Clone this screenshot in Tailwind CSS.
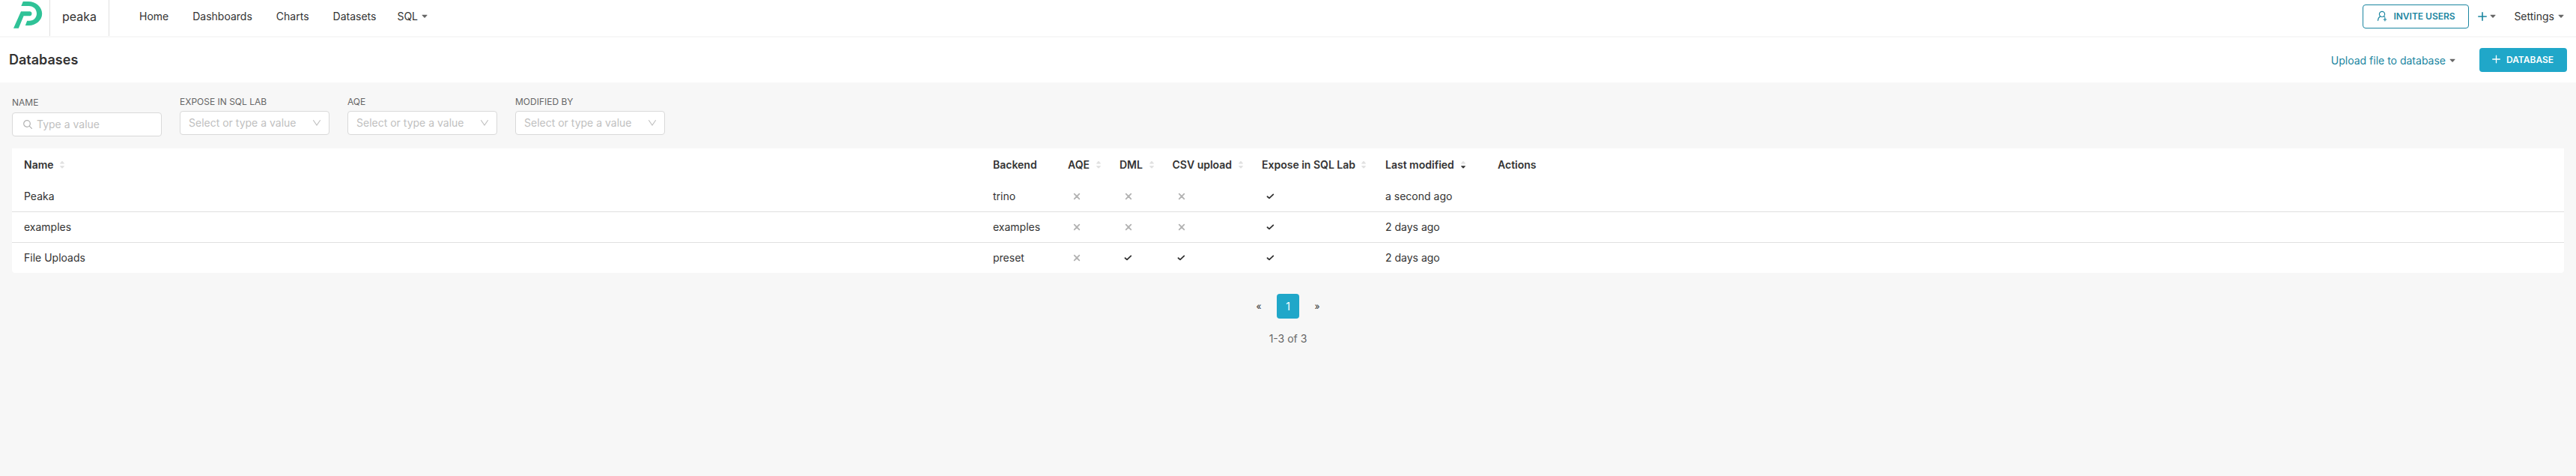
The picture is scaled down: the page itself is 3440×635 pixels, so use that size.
<!DOCTYPE html>
<html lang="en">
<head>
<meta charset="utf-8">
<title>Databases</title>
<script src="https://cdn.jsdelivr.net/npm/@tailwindcss/browser@4"></script>
</head>
<body class="h-[635px] overflow-hidden bg-[#f7f7f7] font-['Inter',sans-serif] text-sm text-[#333333]">
<svg class="hidden">
  <symbol id="caret" viewBox="0 0 8 6"><path d="M1 .8h6c.5 0 .7.4.4.7L4.6 4.600c-.3.3-.8.3-1.100 0L.7 1.500C.4 1.200.6.8 1 .8z" fill="#666666"/></symbol>
  <symbol id="up" viewBox="0 0 8 12"><path d="M3.400 1.300c.3-.3.9-.3 1.200 0l2.200 2.400c.3.400.1.800-.4.800H1.600c-.5 0-.7-.4-.4-.8z" fill="#e0e0e0"/></symbol>
  <symbol id="down" viewBox="0 0 8 12"><path d="M3.400 10.300c.3.300.9.300 1.200 0l2.200-2.300c.3-.4.1-.8-.4-.8H1.600c-.5 0-.7.400-.4.800z" fill="currentColor"/></symbol>
  <symbol id="sort" viewBox="0 0 8 12"><use href="#up"/><use href="#down"/></symbol>
  <symbol id="x" viewBox="0 0 24 24"><path d="M8.700 8.700l6.600 6.600M15.300 8.700l-6.600 6.600" stroke="#b2b2b2" stroke-width="1.800" stroke-linecap="round"/></symbol>
  <symbol id="check" viewBox="0 0 24 24"><path d="M7.500 12.200l2.500 2.200 5.300-5" fill="none" stroke="#323232" stroke-width="1.800" stroke-linecap="round" stroke-linejoin="round"/></symbol>
  <symbol id="chevron" viewBox="0 0 12 12"><path d="M1.300 2.300L6 9l4.700-6.700" fill="none" stroke="#bfbfbf" stroke-width="1.100"/></symbol>
</svg>

<header class="flex h-[50px] items-stretch border-b-2 border-[#f7f7f7] bg-white">
  <div class="flex w-[67px] border-r border-[#e0e0e0] pl-[17px]">
    <svg class="mt-px h-[38px] w-[41px]" viewBox="17 1 41 38" fill="#2fc297">
      <path d="M30.800 2H37.500C48 2 56.200 9.500 56.200 18.300S48 34 38.500 34H33.800L36.200 27.800H39C45 27.800 49 23.500 49 18C49 12.300 44.500 8 38.500 8H28.300z"/>
      <path d="M28 15.200H40.300A3.200 3.200 0 0 1 40.300 21.300H31.600L24.800 37.800H18z"/>
    </svg>
  </div>
  <div class="flex w-[79px] items-center border-r border-[#e0e0e0] pb-[5px] pl-4 text-base">peaka</div>
  <nav class="flex h-11 items-center gap-8 pl-10">
    <a>Home</a><a>Dashboards</a><a>Charts</a><a>Datasets</a>
    <a class="-ml-1 flex items-center gap-[5px]">SQL<svg class="h-1.5 w-2"><use href="#caret"/></svg></a>
  </nav>
  <div class="ml-auto flex h-11 items-center pr-4">
    <button class="flex h-8 w-[142px] items-center rounded border border-[#1a85a0] pl-[18px] text-xs font-semibold text-[#1a85a0]">
      <svg class="mr-2 h-[15px] w-[14px] -translate-y-px" viewBox="0 0 14 15" fill="none" stroke="#1a85a0" stroke-width="1.200" stroke-linecap="round"><circle cx="7" cy="4.900" r="3.600"/><path d="M1.500 13.300c.2-2.700 1.400-4.700 3.200-5.600M9.300 7.700l1.500 1.200M10.900 10.200v3.600M9.100 12h3.600"/></svg>INVITE USERS</button>
    <svg class="ml-3 h-3 w-3" viewBox="0 0 12 12"><path d="M6 .8v10.400M.8 6h10.400" stroke="#1a85a0" stroke-width="1.600" stroke-linecap="round"/></svg>
    <svg class="ml-1 h-1.5 w-2"><use href="#caret"/></svg>
    <a class="ml-6 flex items-center gap-[5px]">Settings<svg class="h-1.5 w-2"><use href="#caret"/></svg></a>
  </div>
</header>

<section class="flex h-[60px] items-center bg-white pr-3 pl-3">
  <h1 class="text-lg font-semibold">Databases</h1>
  <a class="mt-0.5 ml-auto flex items-center gap-[5px] text-[#1a85a0]">Upload file to database<svg class="h-1.5 w-2"><use href="#caret"/></svg></a>
  <button class="ml-8 flex h-8 w-[117px] items-center rounded bg-[#20a7c9] pl-[17px] text-xs font-semibold text-white">
    <svg class="mr-2 h-3 w-[11px] -translate-y-px" viewBox="0 0 11 12"><path d="M5.500 1.200v9.600M.7 6h9.600" stroke="#fff" stroke-width="1.300" stroke-linecap="round"/></svg>DATABASE</button>
</section>

<section class="flex h-[88px] gap-6 px-4 pt-[18px]">
  <label class="w-[200px] pt-px text-xs leading-4 text-[#666666]"><span class="block h-[21px]">NAME</span>
    <span class="flex h-8 items-center rounded border border-[#d9d9d9] bg-white pl-[14px] text-sm text-[#bfbfbf]"><svg class="mr-1.5 h-3 w-3" viewBox="0 0 12 12" fill="none" stroke="#b2b2b2" stroke-width="1.200" stroke-linecap="round"><circle cx="5" cy="5" r="4.300"/><path d="M8.200 8.200l3.200 3.200"/></svg>Type a value</span></label>
  <label class="w-[200px] text-xs leading-4 text-[#666666]"><span class="block h-5">EXPOSE IN SQL LAB</span>
    <span class="flex h-8 items-center justify-between rounded border border-[#d9d9d9] bg-white pr-2.5 pl-[11px] text-sm text-[#bfbfbf]">Select or type a value<svg class="h-3 w-3"><use href="#chevron"/></svg></span></label>
  <label class="w-[200px] text-xs leading-4 text-[#666666]"><span class="block h-5">AQE</span>
    <span class="flex h-8 items-center justify-between rounded border border-[#d9d9d9] bg-white pr-2.5 pl-[11px] text-sm text-[#bfbfbf]">Select or type a value<svg class="h-3 w-3"><use href="#chevron"/></svg></span></label>
  <label class="w-[200px] text-xs leading-4 text-[#666666]"><span class="block h-5">MODIFIED BY</span>
    <span class="flex h-8 items-center justify-between rounded border border-[#d9d9d9] bg-white pr-2.5 pl-[11px] text-sm text-[#bfbfbf]">Select or type a value<svg class="h-3 w-3"><use href="#chevron"/></svg></span></label>
</section>

<main class="mx-4 rounded-b bg-white">
  <div class="grid h-11 grid-cols-[1294px_100px_69px_70.5px_119.5px_165px_150px_1fr] items-center pl-4 font-semibold">
    <div class="flex items-center gap-[7px]">Name<svg class="h-3 w-2 text-[#e0e0e0]"><use href="#sort"/></svg></div>
    <div>Backend</div>
    <div class="flex items-center gap-2">AQE<svg class="h-3 w-2 text-[#e0e0e0]"><use href="#sort"/></svg></div>
    <div class="flex items-center gap-2">DML<svg class="h-3 w-2 text-[#e0e0e0]"><use href="#sort"/></svg></div>
    <div class="flex items-center gap-2">CSV upload<svg class="h-3 w-2 text-[#e0e0e0]"><use href="#sort"/></svg></div>
    <div class="flex items-center gap-[7px]">Expose in SQL Lab<svg class="h-3 w-2 text-[#e0e0e0]"><use href="#sort"/></svg></div>
    <div class="flex items-center gap-2">Last modified<svg class="h-3 w-2 text-[#323232]"><use href="#sort"/></svg></div>
    <div>Actions</div>
  </div>
  <div class="grid h-[41px] grid-cols-[1294px_100px_69px_70.5px_119.5px_165px_150px_1fr] items-center border-b border-[#e0e0e0] pl-4">
    <div>Peaka</div><div>trino</div>
    <svg class="size-6"><use href="#x"/></svg><svg class="size-6"><use href="#x"/></svg><svg class="size-6"><use href="#x"/></svg><svg class="size-6"><use href="#check"/></svg>
    <div>a second ago</div>
  </div>
  <div class="grid h-[41px] grid-cols-[1294px_100px_69px_70.5px_119.5px_165px_150px_1fr] items-center border-b border-[#e0e0e0] pl-4">
    <div>examples</div><div>examples</div>
    <svg class="size-6"><use href="#x"/></svg><svg class="size-6"><use href="#x"/></svg><svg class="size-6"><use href="#x"/></svg><svg class="size-6"><use href="#check"/></svg>
    <div>2 days ago</div>
  </div>
  <div class="grid h-10 grid-cols-[1294px_100px_69px_70.5px_119.5px_165px_150px_1fr] items-center pl-4">
    <div>File Uploads</div><div>preset</div>
    <svg class="size-6"><use href="#x"/></svg><svg class="size-6"><use href="#check"/></svg><svg class="size-6"><use href="#check"/></svg><svg class="size-6"><use href="#check"/></svg>
    <div>2 days ago</div>
  </div>
</main>

<footer class="mt-7 flex flex-col items-center">
  <div class="flex h-[33px] items-center gap-[9px]">
    <span class="w-[30px] text-center text-xs">«</span>
    <span class="flex h-[33px] w-[30px] items-center justify-center rounded bg-[#20a7c9] text-white">1</span>
    <span class="w-[30px] text-center text-xs">»</span>
  </div>
  <div class="mt-[17px] text-[#666666]">1-3 of 3</div>
</footer>
</body>
</html>
